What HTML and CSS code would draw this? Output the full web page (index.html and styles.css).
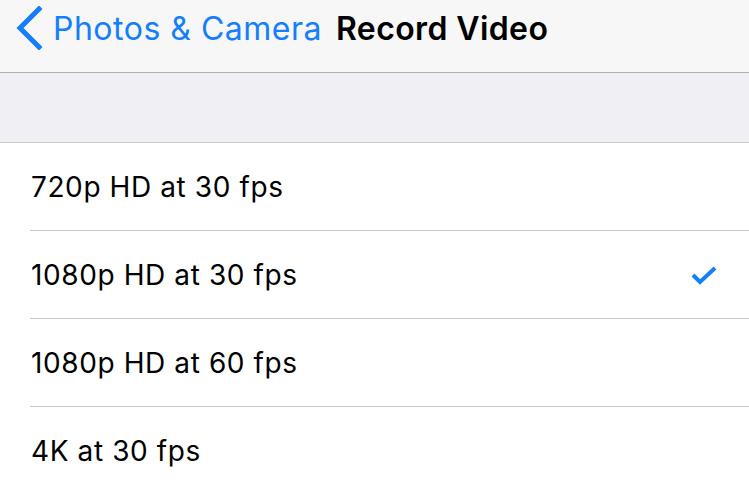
FILE: index.html
```html
<!DOCTYPE html>
<html>
<head>
<meta charset="utf-8">
<link rel="stylesheet" href="styles.css">
</head>
<body>
<header class="nav">
  <a class="back">
    <svg class="chev" width="28" height="44" viewBox="0 0 28 44"><path d="M24 3 L5 22 L24 41" fill="none" stroke="#147efb" stroke-width="5" stroke-linecap="square"/></svg>
    <span class="back-label">Photos &amp; Camera</span>
  </a>
  <h1 class="title">Record Video</h1>
</header>
<div class="band"></div>
<ul class="list">
  <li class="row"><span>720p HD at 30 fps</span></li>
  <li class="row"><span>1080p HD at 30 fps</span>
    <svg class="check" width="28" height="22" viewBox="0 0 28 22"><path d="M3 11 L10 18 L25 4" fill="none" stroke="#147efb" stroke-width="4"/></svg>
  </li>
  <li class="row"><span>1080p HD at 60 fps</span></li>
  <li class="row"><span>4K at 30 fps</span></li>
</ul>
</body>
</html>
```
FILE: styles.css
```css
html, body { margin: 0; padding: 0; }
body {
  width: 749px;
  height: 493px;
  overflow: hidden;
  background: #fff;
  font-family: Inter, "Liberation Sans", Arial, sans-serif;
  color: #000;
}
.nav {
  height: 72px;
  background: #f7f7f8;
  border-bottom: 1px solid #b1b1b4;
  display: flex;
  align-items: center;
}
.back {
  display: flex;
  align-items: center;
  color: #147efb;
  margin-left: 15px;
}
.chev { display: block; margin-top: -16px; }
.back-label {
  font-size: 32px;
  letter-spacing: 0.5px;
  margin-left: 10px;
  margin-top: -16px;
}
.title {
  font-size: 32px;
  font-weight: 600;
  letter-spacing: 0.4px;
  margin: -16px 0 0 14px;
}
.band {
  height: 69px;
  background: #efeff4;
  border-bottom: 1px solid #c8c7cc;
}
.list { list-style: none; margin: 0; padding: 0 0 0 30px; }
.row {
  height: 87px;
  border-bottom: 1px solid #c8c7cc;
  display: flex;
  align-items: center;
  justify-content: space-between;
  padding-right: 30px;
  font-size: 28px;
  letter-spacing: 0.6px;
}
.row span { margin-left: 1px; }
.row:last-child { border-bottom: none; }
.check { display: block; margin-right: 1px; }
```
